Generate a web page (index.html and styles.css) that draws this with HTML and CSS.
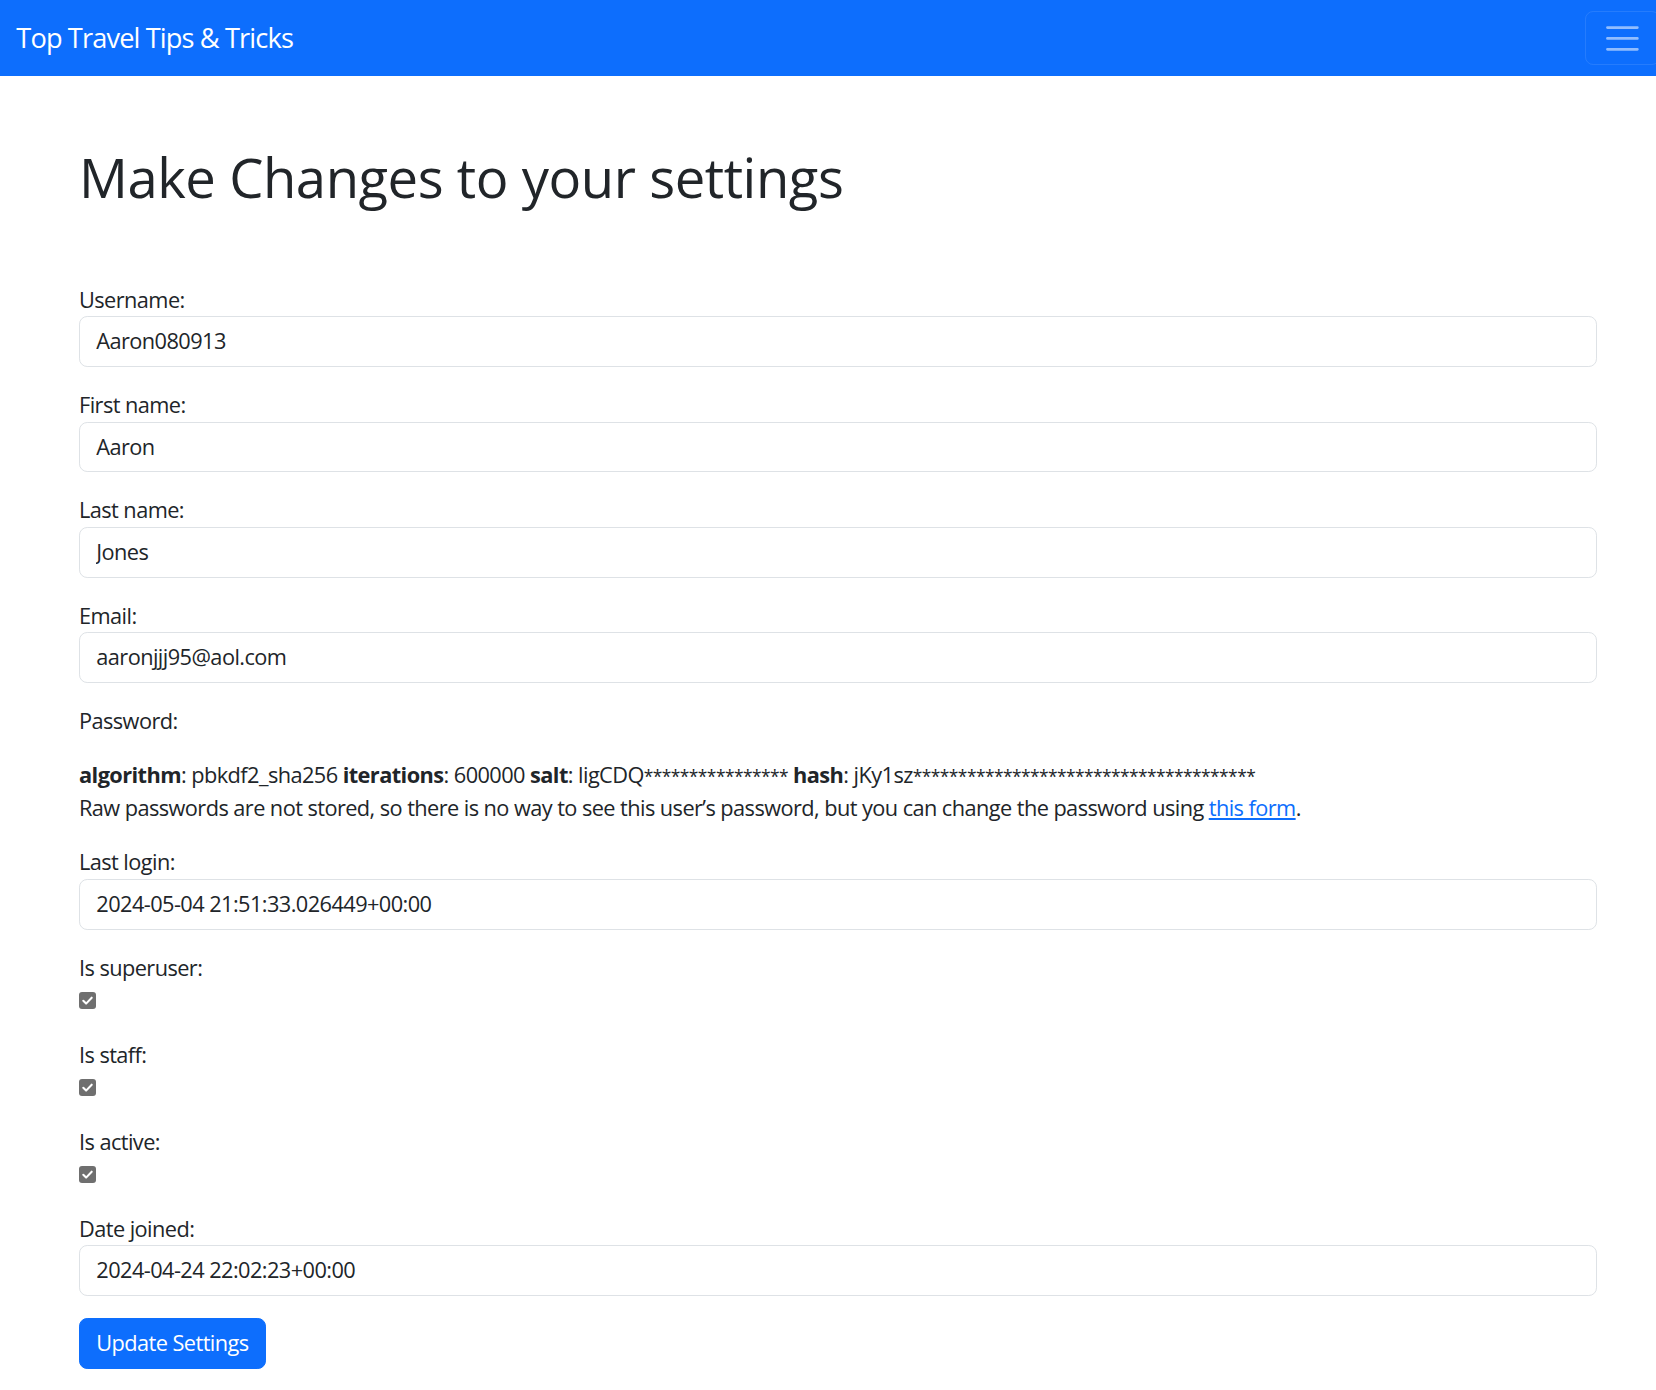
FILE: index.html
```html
<!DOCTYPE html>
<html lang="en">
<head>
<meta charset="utf-8">
<title>Settings</title>
<link rel="stylesheet" href="styles.css">
</head>
<body>
<nav class="navbar">
  <a class="brand" href="#">Top Travel Tips &amp; Tricks</a>
  <button class="toggler" type="button" aria-label="Toggle navigation">
    <svg class="toggler-icon" viewBox="0 0 30 30" xmlns="http://www.w3.org/2000/svg"><path d="M4 7h22M4 15h22M4 23h22" stroke="rgba(255,255,255,0.55)" stroke-width="2" stroke-linecap="round" stroke-miterlimit="10" fill="none"/></svg>
  </button>
</nav>
<main class="page">
  <h1 class="title">Make Changes to your settings</h1>
  <form class="settings">
    <div class="field">
      <label class="label">Username:</label>
      <input class="control" type="text" value="Aaron080913">
    </div>
    <div class="field">
      <label class="label">First name:</label>
      <input class="control" type="text" value="Aaron">
    </div>
    <div class="field">
      <label class="label">Last name:</label>
      <input class="control" type="text" value="Jones">
    </div>
    <div class="field">
      <label class="label">Email:</label>
      <input class="control" type="text" value="aaronjjj95@aol.com">
    </div>
    <div class="field">
      <label class="label">Password:</label>
    </div>
    <div class="field">
      <div class="hash"><strong>algorithm</strong>: pbkdf2_sha256 <strong>iterations</strong>: 600000 <strong>salt</strong>: ligCDQ<span class="stars">****************</span> <strong>hash</strong>: jKy1sz<span class="stars">**************************************</span></div>
      <div class="help">Raw passwords are not stored, so there is no way to see this user’s password, but you can change the password using <a class="link" href="#">this form</a>.</div>
    </div>
    <div class="field">
      <label class="label">Last login:</label>
      <input class="control" type="text" value="2024-05-04 21:51:33.026449+00:00">
    </div>
    <div class="field">
      <label class="label">Is superuser:</label>
      <div class="check-line"><span class="checkbox"><svg viewBox="0 0 16 16" xmlns="http://www.w3.org/2000/svg"><path d="M3.5 8.3l3 3 6-6.3" stroke="#fff" stroke-width="2.2" fill="none" stroke-linecap="round" stroke-linejoin="round"/></svg></span></div>
    </div>
    <div class="field">
      <label class="label">Is staff:</label>
      <div class="check-line"><span class="checkbox"><svg viewBox="0 0 16 16" xmlns="http://www.w3.org/2000/svg"><path d="M3.5 8.3l3 3 6-6.3" stroke="#fff" stroke-width="2.2" fill="none" stroke-linecap="round" stroke-linejoin="round"/></svg></span></div>
    </div>
    <div class="field">
      <label class="label">Is active:</label>
      <div class="check-line"><span class="checkbox"><svg viewBox="0 0 16 16" xmlns="http://www.w3.org/2000/svg"><path d="M3.5 8.3l3 3 6-6.3" stroke="#fff" stroke-width="2.2" fill="none" stroke-linecap="round" stroke-linejoin="round"/></svg></span></div>
    </div>
    <div class="field">
      <label class="label">Date joined:</label>
      <input class="control" type="text" value="2024-04-24 22:02:23+00:00">
    </div>
    <button class="btn" type="button">Update Settings</button>
  </form>
</main>
</body>
</html>
```

FILE: styles.css
```css
html {
  font-size: 21.76px;
  overflow-x: hidden;
}
body {
  margin: 0;
  font-family: "Open Sans", "Noto Sans", "Liberation Sans", sans-serif;
  font-size: 1rem;
  line-height: 1.5;
  letter-spacing: -0.57px;
  color: #212529;
  background: #fff;
}
.navbar {
  display: flex;
  align-items: center;
  justify-content: space-between;
  height: 76px;
  box-sizing: border-box;
  padding: 0 0 0 0.75rem;
  background: #0d6efd;
  overflow: hidden;
}
.brand {
  font-size: 1.25rem;
  line-height: 1.5;
  letter-spacing: -0.87px;
  color: #fff;
  text-decoration: none;
  padding: 0.25rem 0;
}
.toggler {
  display: flex;
  align-items: center;
  padding: 0.25rem 0.75rem;
  margin-right: -4px;
  font-size: 1.25rem;
  line-height: 1;
  background: transparent;
  border: 1px solid rgba(255, 255, 255, 0.1);
  border-radius: 0.375rem;
}
.toggler-icon {
  width: 1.5em;
  height: 1.5em;
  display: block;
}
.page {
  padding: 69px 59px 40px 79px;
}
.title {
  margin: 0 0 0.5rem;
  font-size: 2.5rem;
  font-weight: 500;
  line-height: 1.2;
  letter-spacing: -0.45px;
}
.settings {
  margin-top: calc(3rem + 8px);
}
.field {
  margin-bottom: 1rem;
}
.label {
  display: block;
}
.control {
  display: block;
  width: 100%;
  box-sizing: border-box;
  padding: 0.375rem 0.75rem;
  font: inherit;
  font-size: 1rem;
  line-height: 1.5;
  letter-spacing: inherit;
  color: #212529;
  background: #fff;
  border: 1px solid #dee2e6;
  border-radius: 0.375rem;
  outline: none;
}
.hash strong {
  font-weight: 700;
}
.stars {
  font-size: 0.8em;
}
.link {
  color: #0d6efd;
  text-decoration: underline;
}
.check-line {
  height: 1.5em;
  display: flex;
  align-items: center;
}
.checkbox {
  width: 17px;
  height: 17px;
  box-sizing: border-box;
  border-radius: 3px;
  background: #6f6f6f;
  display: flex;
  align-items: center;
  justify-content: center;
}
.checkbox svg {
  width: 15px;
  height: 15px;
  display: block;
}
.btn {
  display: inline-block;
  padding: 0.375rem 0.75rem;
  font: inherit;
  font-size: 1rem;
  line-height: 1.5;
  letter-spacing: inherit;
  color: #fff;
  background: #0d6efd;
  border: 1px solid #0d6efd;
  border-radius: 0.375rem;
  cursor: pointer;
}
```
